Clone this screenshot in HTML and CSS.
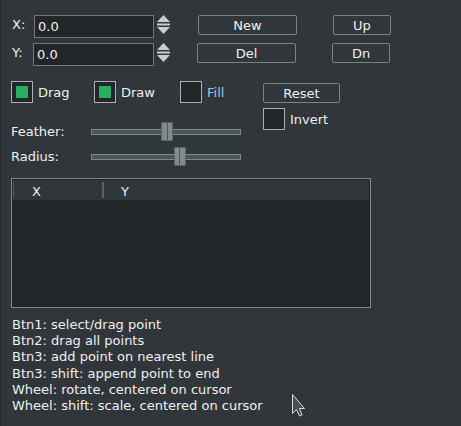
FILE: index.html
```html
<!DOCTYPE html>
<html>
<head>
<meta charset="utf-8">
<link rel="stylesheet" href="styles.css">
</head>
<body>
<div class="app">
  <div class="row row1">
    <span class="lbl">X:</span>
    <div class="input">0.0</div>
    <div class="spin">
      <svg width="13" height="20" viewBox="0 0 13 20"><polygon points="6.5,0 13,7 0,7" fill="#c8ccd0"/><rect x="0" y="8.5" width="13" height="2" fill="#c8ccd0"/><polygon points="0,12 13,12 6.5,19" fill="#c8ccd0"/></svg>
    </div>
    <button class="btn btn-wide">New</button>
    <button class="btn btn-narrow">Up</button>
  </div>
  <div class="row row2">
    <span class="lbl">Y:</span>
    <div class="input">0.0</div>
    <div class="spin">
      <svg width="13" height="20" viewBox="0 0 13 20"><polygon points="6.5,0 13,7 0,7" fill="#c8ccd0"/><rect x="0" y="8.5" width="13" height="2" fill="#c8ccd0"/><polygon points="0,12 13,12 6.5,19" fill="#c8ccd0"/></svg>
    </div>
    <button class="btn btn-wide">Del</button>
    <button class="btn btn-narrow">Dn</button>
  </div>

  <div class="mid">
    <div class="left">
      <div class="checks">
        <label class="check c1"><span class="box on"></span><span>Drag</span></label>
        <label class="check c2"><span class="box on"></span><span>Draw</span></label>
        <label class="check c3"><span class="box"></span><span class="hl">Fill</span></label>
      </div>
      <div class="slider-row s1">
        <span class="slbl">Feather:</span>
        <div class="track"><div class="handle" style="left:69px"></div></div>
      </div>
      <div class="slider-row s2">
        <span class="slbl">Radius:</span>
        <div class="track"><div class="handle" style="left:82px"></div></div>
      </div>
    </div>
    <div class="right">
      <button class="btn btn-reset">Reset</button>
      <label class="check"><span class="box"></span><span>Invert</span></label>
    </div>
  </div>

  <div class="table">
    <div class="thead">
      <div class="th th1">X</div>
      <div class="th th2">Y</div>
    </div>
  </div>

  <div class="help">
    <div>Btn1: select/drag point</div>
    <div>Btn2: drag all points</div>
    <div>Btn3: add point on nearest line</div>
    <div>Btn3: shift: append point to end</div>
    <div>Wheel: rotate, centered on cursor</div>
    <div>Wheel: shift: scale, centered on cursor</div>
  </div>
</div>
<svg class="cursor" width="16" height="24" viewBox="0 0 16 24"><path d="M0.5,0.5 L0.5,19.5 L4.5,15.5 L7.5,22 L10,21 L7.5,14.5 L12.5,14.5 Z" fill="#4a4d50" stroke="#d8dadc" stroke-width="1"/></svg>
</body>
</html>
```
FILE: styles.css
```css
html, body {
  margin: 0;
  padding: 0;
  background: #31363b;
}
body {
  width: 461px;
  height: 426px;
  overflow: hidden;
  position: relative;
  font-family: "DejaVu Sans", "Noto Sans", sans-serif;
  font-size: 13px;
  color: #eff0f1;
}
.app {
  border-left: 1px solid #26292d;
  height: 426px;
  box-sizing: border-box;
  padding-left: 10px;
  padding-top: 15px;
}
.row {
  display: flex;
  align-items: flex-start;
  height: 23px;
}
.row2 { margin-top: 5px; }
.lbl {
  width: 23px;
  padding-left: 1px;
  box-sizing: border-box;
  line-height: 19px;
}
.row2 .lbl { width: 22px; }
.row2 .input { width: 121px; }
.input {
  width: 120px;
  height: 23px;
  box-sizing: border-box;
  border: 1px solid #6f7a7c;
  background: #232629;
  padding-left: 3px;
  line-height: 21px;
}
.spin {
  margin-left: 3px;
  width: 13px;
  height: 20px;
}
.btn {
  font-family: inherit;
  font-size: 13px;
  color: #eff0f1;
  background: #31363b;
  border: 1px solid #7a8384;
  border-radius: 2px;
  height: 20px;
  padding: 0;
  line-height: 17px;
  box-sizing: border-box;
}
.btn-wide { width: 99px; margin-left: 28px; }
.btn-narrow { width: 58px; margin-left: 36px; }
.row2 .btn-wide { margin-left: 27px; }
.mid {
  display: flex;
  margin-top: 15px;
}
.left { width: 252px; }
.checks { display: flex; height: 22px; }
.check {
  display: flex;
  align-items: center;
  gap: 5px;
  height: 22px;
}
.c1 { width: 83px; }
.c2 { width: 86px; }
.box {
  width: 22px;
  height: 22px;
  box-sizing: border-box;
  border: 1px solid #a9afb3;
  background: #232629;
  display: flex;
  align-items: center;
  justify-content: center;
}
.box.on::after {
  content: "";
  width: 12px;
  height: 12px;
  background: #27ae60;
}
.hl { color: #8fc8ee; }
.slider-row {
  display: flex;
  align-items: center;
  height: 25px;
}
.s1 { margin-top: 16px; }
.slbl { width: 80px; }
.track {
  position: relative;
  width: 150px;
  height: 6px;
  box-sizing: border-box;
  border: 1px solid #7d898b;
  background: #4c5558;
}
.handle {
  position: absolute;
  top: -8px;
  width: 12px;
  height: 19px;
  box-sizing: border-box;
  border: 1px solid #5b6567;
  border-radius: 1px;
  background: linear-gradient(to right, #7f8b8c 0, #7f8b8c 4.5px, #4d5658 4.5px, #4d5658 5.5px, #7f8b8c 5.5px);
}
.right {
  padding-top: 2px;
  display: flex;
  flex-direction: column;
  gap: 5px;
  align-items: flex-start;
}
.btn-reset { width: 77px; }
.table {
  margin-top: 9px;
  width: 360px;
  height: 130px;
  box-sizing: border-box;
  border: 1px solid #7d898b;
  background: #232629;
  padding: 1px;
}
.thead {
  display: flex;
  height: 20px;
  background: #31363b;
}
.th {
  position: relative;
  line-height: 24px;
}
.th::before {
  content: "";
  position: absolute;
  left: 0;
  top: 2px;
  width: 1px;
  height: 16px;
  background: #5a6164;
}
.th1 { width: 89px; padding-left: 19px; box-sizing: border-box; }
.th2 { padding-left: 19px; }
.th2::before { width: 2px; }
.help {
  margin-top: 9px;
  padding-left: 1px;
  line-height: 16.2px;
}
.cursor {
  position: absolute;
  left: 292px;
  top: 394px;
}
```
